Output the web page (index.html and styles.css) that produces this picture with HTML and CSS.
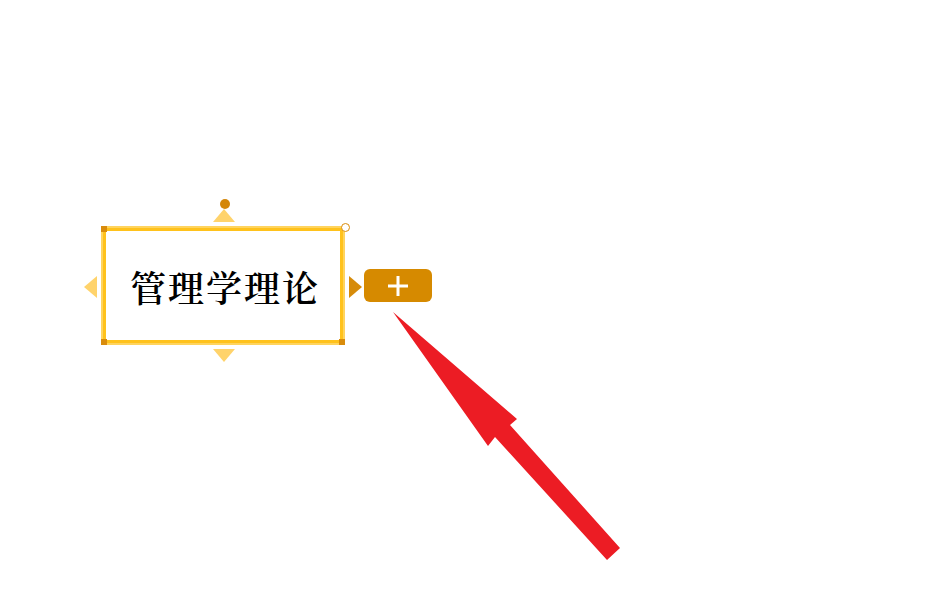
FILE: index.html
```html
<!DOCTYPE html>
<html lang="zh">
<head>
<meta charset="utf-8">
<title>管理学理论</title>
<link rel="stylesheet" href="styles.css">
</head>
<body>
<div class="canvas">
  <div class="node">
    <span class="node-text">管理学理论</span>
    <span class="corner corner-tl"></span>
    <span class="corner corner-bl"></span>
    <span class="corner corner-br"></span>
    <span class="rotate-dot"></span>
    <span class="resize-dot"></span>
    <span class="tri tri-up"></span>
    <span class="tri tri-down"></span>
    <span class="tri tri-left"></span>
    <span class="tri tri-right"></span>
    <button class="add-btn" type="button" aria-label="添加">
      <svg width="22" height="22" viewBox="0 0 22 22"><path d="M11 1v20M1 11h20" stroke="#fff" stroke-width="3" fill="none"/></svg>
    </button>
  </div>
  <svg class="pointer" width="949" height="605" viewBox="0 0 949 605">
    <polygon points="393,312 517,419 510,425 620,548 607,560 495,437 488,446" fill="#ec1c24"/>
  </svg>
</div>
</body>
</html>
```

FILE: styles.css
```css
html, body {
  margin: 0;
  padding: 0;
  background: #ffffff;
}
.canvas {
  position: relative;
  width: 949px;
  height: 605px;
  overflow: hidden;
  font-family: "Noto Serif CJK SC", "Noto Sans CJK SC", serif;
}
.node {
  position: absolute;
  left: 101px;
  top: 226px;
  width: 244px;
  height: 119px;
  box-sizing: border-box;
  border: 2px solid #ffd45e;
  box-shadow: inset 0 0 0 3px #ffc21c;
  background: #fff;
  display: flex;
  align-items: center;
  justify-content: center;
}
.node-text {
  font-size: 36px;
  font-weight: 600;
  color: #000;
  letter-spacing: 2px;
  margin-right: -2px;
  padding-left: 2px;
  line-height: 1;
  margin-top: 2px;
}
.corner {
  position: absolute;
  width: 6px;
  height: 6px;
  background: #d98c0c;
}
.corner-tl { left: -2px; top: -2px; }
.corner-bl { left: -2px; bottom: -2px; }
.corner-br { right: -2px; bottom: -2px; }
.rotate-dot {
  position: absolute;
  left: 117px;
  top: -29px;
  width: 10px;
  height: 10px;
  border-radius: 50%;
  background: #d4870a;
}
.resize-dot {
  position: absolute;
  right: -7px;
  top: -5px;
  width: 7px;
  height: 7px;
  border-radius: 50%;
  background: #fff;
  border: 1px solid #d98c0c;
}
.tri {
  position: absolute;
  width: 0;
  height: 0;
}
.tri-up {
  left: 110px;
  top: -19px;
  border-left: 11px solid transparent;
  border-right: 11px solid transparent;
  border-bottom: 13px solid #ffd36b;
}
.tri-down {
  left: 110px;
  bottom: -19px;
  border-left: 11px solid transparent;
  border-right: 11px solid transparent;
  border-top: 13px solid #ffd36b;
}
.tri-left {
  left: -19px;
  top: 48px;
  border-top: 11px solid transparent;
  border-bottom: 11px solid transparent;
  border-right: 13px solid #ffd36b;
}
.tri-right {
  right: -19px;
  top: 48px;
  border-top: 11px solid transparent;
  border-bottom: 11px solid transparent;
  border-left: 13px solid #d68b0a;
}
.add-btn {
  position: absolute;
  left: 261px;
  top: 41px;
  width: 68px;
  height: 33px;
  padding: 0;
  border: none;
  border-radius: 6px;
  background: #d68a00;
  display: flex;
  align-items: center;
  justify-content: center;
}
.add-btn svg {
  display: block;
}
.pointer {
  position: absolute;
  left: 0;
  top: 0;
  pointer-events: none;
}
```
